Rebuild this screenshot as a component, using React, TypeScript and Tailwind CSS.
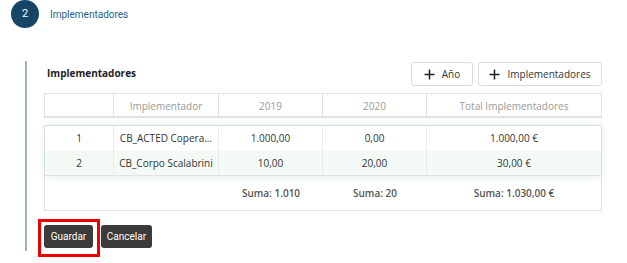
import React from "react";

const rows = [
  { n: "1", name: "CB_ACTED Copera...", a: "1.000,00", b: "0,00", t: "1.000,00 €", bg: "bg-white", h: "h-[25px]" },
  { n: "2", name: "CB_Corpo Scalabrini", a: "10,00", b: "20,00", t: "30,00 €", bg: "bg-[#f3faf6]", h: "h-[24px]" },
];

const cols = "grid grid-cols-[69px_105px_104px_104px_1fr]";

function Plus() {
  return (
    <svg width="11" height="11" viewBox="0 0 11 11" className="shrink-0">
      <path d="M5.5 0.5V10.5M0.5 5.5H10.5" stroke="#222" strokeWidth="1.5" />
    </svg>
  );
}

export default function App() {
  return (
    <div className="w-[627px] h-[263px] bg-white relative overflow-hidden" style={{ fontFamily: "'Open Sans', sans-serif" }}>
      <div className="flex items-center h-[28px] pl-[11px]">
        <div className="w-[28px] h-[28px] rounded-full bg-[#174566] text-white flex items-center justify-center text-[11px]" style={{ fontFamily: "Roboto, sans-serif" }}>2</div>
        <div className="ml-[11px] text-[10px] text-[#2b5f8a]" style={{ fontFamily: "Roboto, sans-serif" }}>Implementadores</div>
      </div>
      <div className="mt-[33px] ml-[25px] border-l-2 border-[#9fb0c2] h-[190px] pl-[17px] pr-[25px]">
        <div className="flex items-start justify-between h-[32px] pt-[1px]">
          <div className="pl-[3px] pt-[4px] text-[10px] font-bold text-[#222]">Implementadores</div>
          <div className="flex gap-[5px]">
            <button className="h-[24px] w-[62px] border border-[#dcdcdc] rounded-[3px] flex items-center justify-center gap-[7px] text-[10px] text-[#333]"><Plus />Año</button>
            <button className="h-[24px] w-[124px] border border-[#dcdcdc] rounded-[3px] flex items-center justify-center gap-[7px] text-[10px] text-[#333]"><Plus />Implementadores</button>
          </div>
        </div>
        <div className={`${cols} h-[25px] border border-[#e2e2e2] border-b-2 text-[10px] text-[#999] items-stretch`}>
          <div className="border-r border-[#e2e2e2]"></div>
          <div className="border-r border-[#e2e2e2] flex items-center justify-center pt-[2px]">Implementador</div>
          <div className="border-r border-[#e2e2e2] flex items-center justify-center pt-[2px]">2019</div>
          <div className="border-r border-[#e2e2e2] flex items-center justify-center pt-[2px]">2020</div>
          <div className="flex items-center justify-center pt-[2px]">Total Implementadores</div>
        </div>
        <div className="mt-[7px] border border-[#e2e2e2]">
          <div className="shadow-[0_0_8px_rgba(120,190,150,0.25)] border-b border-[#e2e2e2]">
            {rows.map((r) => (
              <div key={r.n} className={`${cols} ${r.h} ${r.bg} text-[10px] text-[#333]`}>
                <div className="border-r border-[#eaeaea] flex items-center justify-center">{r.n}</div>
                <div className="border-r border-[#eaeaea] flex items-center justify-center">{r.name}</div>
                <div className="border-r border-[#eaeaea] flex items-center justify-center">{r.a}</div>
                <div className="border-r border-[#eaeaea] flex items-center justify-center">{r.b}</div>
                <div className="flex items-center justify-center">{r.t}</div>
              </div>
            ))}
          </div>
          <div className={`${cols} h-[34px] text-[10px] font-semibold text-[#555]`}>
            <div></div>
            <div></div>
            <div className="flex items-center justify-center">Suma: 1.010</div>
            <div className="flex items-center justify-center">Suma: 20</div>
            <div className="flex items-center justify-center">Suma: 1.030,00 €</div>
          </div>
        </div>
      </div>
      <div className="absolute left-[38px] top-[219px] w-[62px] h-[38px] border-[3px] border-[#ee0000]"></div>
      <div className="absolute left-[44px] top-[225px] flex gap-[8px]" style={{ fontFamily: "Roboto, sans-serif" }}>
        <button className="w-[49px] h-[23px] rounded-[3px] bg-[#3b3b3b] text-white text-[10px] flex items-center justify-center">Guardar</button>
        <button className="w-[51px] h-[23px] rounded-[3px] bg-[#3b3b3b] text-white text-[10px] flex items-center justify-center">Cancelar</button>
      </div>
    </div>
  );
}
